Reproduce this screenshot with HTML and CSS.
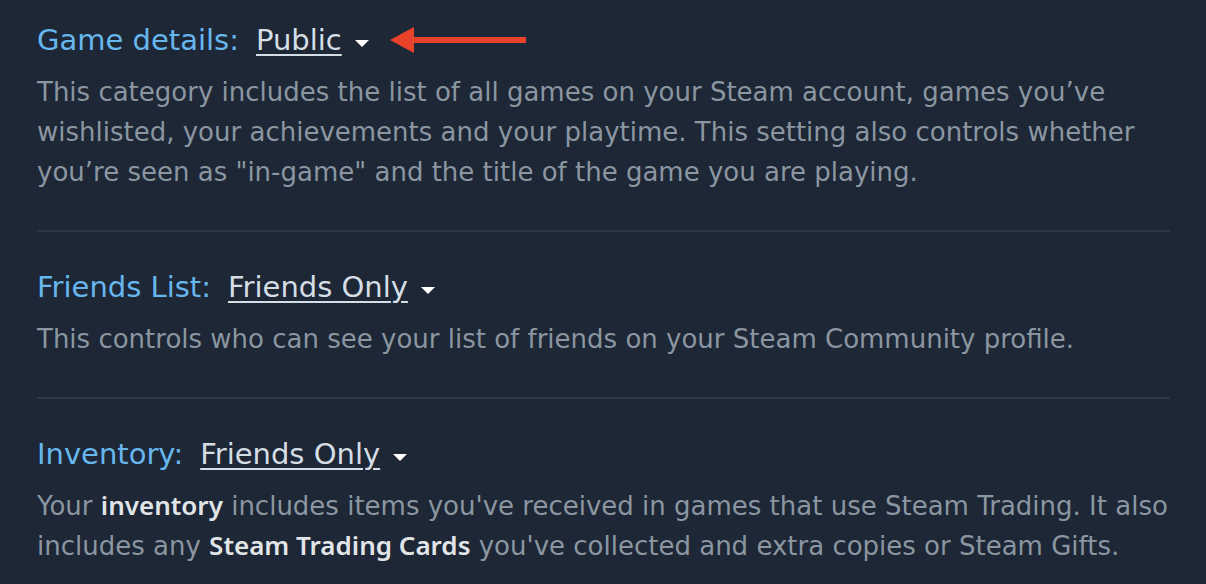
FILE: index.html
```html
<!DOCTYPE html>
<html>
<head>
<meta charset="utf-8">
<link rel="stylesheet" href="styles.css">
</head>
<body>
<div class="page">
  <section class="setting">
    <div class="title">
      <span class="label">Game details:</span>
      <span class="value">Public</span>
      <span class="caret"></span>
      <svg class="arrow" width="136" height="26" viewBox="0 0 136 26"><polygon points="0,13 24,0 24,10 136,10 136,16 24,16 24,26" fill="#e8432a"/></svg>
    </div>
    <p class="desc">This category includes the list of all games on your Steam account, games you’ve wishlisted, your achievements and your playtime. This setting also controls whether you’re seen as "in-game" and the title of the game you are playing.</p>
  </section>
  <section class="setting">
    <div class="title">
      <span class="label">Friends List:</span>
      <span class="value">Friends Only</span>
      <span class="caret"></span>
    </div>
    <p class="desc">This controls who can see your list of friends on your Steam Community profile.</p>
  </section>
  <section class="setting">
    <div class="title">
      <span class="label">Inventory:</span>
      <span class="value">Friends Only</span>
      <span class="caret"></span>
    </div>
    <p class="desc">Your <b>inventory</b> includes items you've received in games that use Steam Trading. It also includes any <b>Steam Trading Cards</b> you've collected and extra copies or Steam Gifts.</p>
  </section>
</div>
</body>
</html>
```
FILE: styles.css
```css
html, body { margin: 0; padding: 0; background: #1d2736; }
body { font-family: "DejaVu Sans", "Noto Sans", sans-serif; }
.page { padding: 20px 36px 0 37px; }
.setting { border-bottom: 2px solid #2d3847; padding-bottom: 38px; margin-bottom: 35px; }
.setting:last-child { border-bottom: none; }
.title { display: flex; align-items: center; height: 40px; font-size: 29px; }
.label { color: #67b7ee; margin-right: 17px; }
.value { color: #d5dde5; text-decoration: underline; text-underline-offset: 4px; text-decoration-thickness: 2px; }
.caret { width: 0; height: 0; border-left: 7px solid transparent; border-right: 7px solid transparent; border-top: 7px solid #ffffff; margin-left: 13px; margin-top: 6px; }
.arrow { margin-left: 21px; margin-top: 0; }
.desc { margin: 12px 0 0; color: #8b96a1; font-size: 26px; line-height: 40px; }
.desc b { font-family: "Noto Sans", "DejaVu Sans", sans-serif; color: #e2e5e8; font-weight: 600; line-height: 1; }
```
